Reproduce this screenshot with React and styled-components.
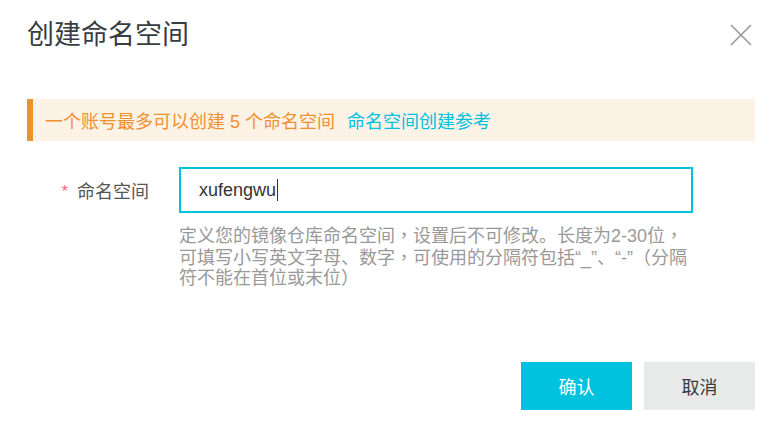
import React from "react";
import styled, { createGlobalStyle } from "styled-components";

const Global = createGlobalStyle`
  html, body { margin: 0; padding: 0; background: #fff; }
  body { font-family: "Liberation Sans", "Noto Sans CJK SC", sans-serif; }
`;

const Dialog = styled.div`
  width: 780px;
  height: 444px;
  box-sizing: border-box;
  padding: 0 25px 0 27px;
  display: flex;
  flex-direction: column;
  background: #fff;
`;

const Header = styled.div`
  height: 72px;
  display: flex;
  align-items: center;
  justify-content: space-between;
`;

const Title = styled.h1`
  margin: 0;
  font-size: 27px;
  font-weight: 400;
  color: #373d41;
  line-height: 1;
  margin-top: -2px;
`;

const Close = styled.button`
  border: 0;
  background: none;
  padding: 0;
  width: 24px;
  height: 24px;
  display: flex;
  align-items: center;
  justify-content: center;
  cursor: pointer;
  margin-right: 2px;
  margin-top: -2px;
`;

const Alert = styled.div`
  margin-top: 27px;
  height: 42px;
  box-sizing: border-box;
  display: flex;
  align-items: center;
  gap: 12px;
  background: #fcf2e6;
  border-left: 6px solid #f0912f;
  padding-left: 12px;
  font-size: 18px;
  color: #f0912f;
`;

const Link = styled.a`
  color: #00c1de;
  text-decoration: none;
`;

const FormRow = styled.div`
  margin-top: 26px;
  display: grid;
  grid-template-columns: 152px 514px;
  align-items: start;
`;

const Label = styled.label`
  height: 46px;
  display: flex;
  align-items: center;
  justify-content: flex-end;
  padding-right: 30px;
  font-size: 18px;
  color: #555;
  gap: 6px;
`;

const Required = styled.span`
  color: #f36b6b;
  font-size: 16px;
  position: relative;
  top: 2px;
  left: -3px;
`;

const Field = styled.div`
  display: flex;
  flex-direction: column;
`;

const Input = styled.div`
  height: 46px;
  box-sizing: border-box;
  border: 2px solid #00c1de;
  display: flex;
  align-items: center;
  padding-left: 18px;
  font-size: 18px;
  color: #333;
`;

const Caret = styled.span`
  display: inline-block;
  width: 1px;
  height: 22px;
  background: #333;
  margin-left: 1px;
`;

const Help = styled.div`
  margin-top: 11px;
  font-size: 18px;
  line-height: 20px;
  color: #999;
  white-space: nowrap;
  text-spacing-trim: space-all;
`;

const Comma = styled.span`
  font-family: "Noto Sans CJK TC", sans-serif;
`;

const Footer = styled.div`
  margin-top: auto;
  margin-bottom: 34px;
  display: flex;
  justify-content: flex-end;
  gap: 12px;
`;

const Button = styled.button`
  width: 111px;
  height: 48px;
  border: 0;
  font-family: inherit;
  font-size: 18px;
  cursor: pointer;
  background: ${(p) => (p.$primary ? "#00c1de" : "#e8eaea")};
  color: ${(p) => (p.$primary ? "#fff" : "#373d41")};
`;

export default function App() {
  return (
    <>
      <Global />
      <Dialog>
        <Header>
          <Title>创建命名空间</Title>
          <Close aria-label="close">
            <svg width="22" height="22" viewBox="0 0 22 22">
              <path d="M1 1 L21 21 M21 1 L1 21" stroke="#999" strokeWidth="1.6" fill="none" />
            </svg>
          </Close>
        </Header>
        <Alert>
          <span>一个账号最多可以创建 5 个命名空间</span>
          <Link href="#">命名空间创建参考</Link>
        </Alert>
        <FormRow>
          <Label>
            <Required>*</Required>
            命名空间
          </Label>
          <Field>
            <Input>
              xufengwu
              <Caret />
            </Input>
            <Help>
              定义您的镜像仓库命名空间<Comma lang="zh-Hant">，</Comma>设置后不可修改。长度为2-30位<Comma lang="zh-Hant">，</Comma>
              <br />
              可填写小写英文字母、数字<Comma lang="zh-Hant">，</Comma>可使用的分隔符包括“_”、“-”（分隔
              <br />
              符不能在首位或末位）
            </Help>
          </Field>
        </FormRow>
        <Footer>
          <Button $primary>确认</Button>
          <Button>取消</Button>
        </Footer>
      </Dialog>
    </>
  );
}
